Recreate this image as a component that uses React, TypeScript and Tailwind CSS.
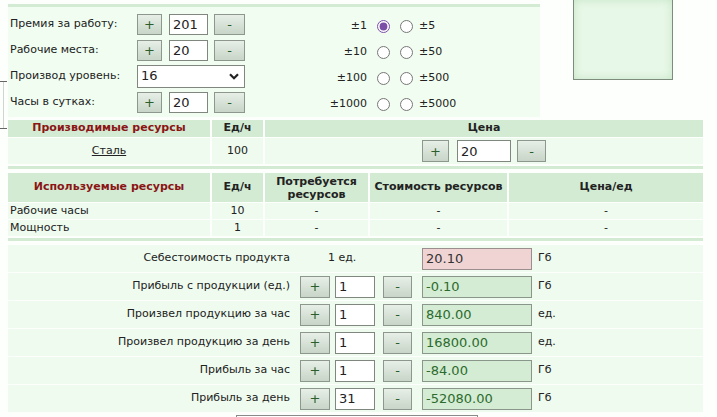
import React from "react";

const btn =
  "flex items-center justify-center border border-[#8d978d] bg-linear-to-b from-[#e7efe7] to-[#c8d5c8] text-[#2b5e2b] text-[13px] leading-none shrink-0";
const inp =
  "border border-[#7f877f] bg-white text-[13px] text-[#222] pl-[3px] outline-none shrink-0";
const hdr = "bg-[#d3ebd3] flex items-center justify-center font-bold";
const row = "bg-[#eefbee] flex items-center justify-center";

function TopRow({ label, value }: { label: string; value: string }) {
  return (
    <div className="flex items-center h-[26px]">
      <div className="w-[127px] shrink-0">{label}</div>
      <div className={`${btn} w-[25px] h-[21px]`}>+</div>
      <input className={`${inp} ml-[7px] w-[39px] h-[21px]`} defaultValue={value} readOnly />
      <div className={`${btn} ml-[6px] w-[31px] h-[21px]`}>-</div>
    </div>
  );
}

function RadioRow({ a, b, checked }: { a: string; b: string; checked?: boolean }) {
  return (
    <div className="flex items-center h-[26px]">
      <div className="w-[62px] text-right">{a}</div>
      <input
        type="radio"
        name="step"
        defaultChecked={checked}
        className="m-0 ml-[10px] w-[13px] h-[13px] accent-[#7b4fa6]"
      />
      <input type="radio" name="step" className="m-0 ml-[10px] w-[13px] h-[13px] accent-[#7b4fa6]" />
      <div className="ml-[6px]">{b}</div>
    </div>
  );
}

function CalcRow({
  label,
  value,
  result,
  unit,
}: {
  label: string;
  value: string;
  result: string;
  unit: string;
}) {
  return (
    <div className="flex items-center h-[27px] bg-[#eefbee] shrink-0">
      <div className="w-[285px] text-right pr-[3px] shrink-0">{label}</div>
      <div className={`${btn} ml-[7px] w-[30px] h-[22px]`}>+</div>
      <input className={`${inp} ml-[5px] w-[40px] h-[22px]`} defaultValue={value} readOnly />
      <div className={`${btn} ml-[8px] w-[29px] h-[22px]`}>-</div>
      <input
        className="ml-[10px] w-[110px] h-[22px] border border-[#8a968a] bg-[#d3ecd3] text-[#2d6a2d] text-[13px] pl-[3px] outline-none shrink-0"
        defaultValue={result}
        readOnly
      />
      <div className="ml-[6px]">{unit}</div>
    </div>
  );
}

export default function App() {
  return (
    <div className="w-[717px] h-[417px] overflow-hidden bg-[#fcfffc] font-['DejaVu_Sans',sans-serif] text-[11px] text-[#222] flex items-start">
      {/* left margin */}
      <div className="w-[8px] shrink-0 flex flex-col">
        <div className="mt-[81px] h-[1px] w-[7px] bg-[#666] shrink-0" />
        <div className="ml-[3px] h-[46px] w-[1px] bg-[#d0d6d0] shrink-0" />
        <div className="h-[1px] w-[7px] bg-[#666] shrink-0" />
      </div>

      <div className="w-[695px] shrink-0 flex flex-col">
        {/* top section */}
        <div className="flex shrink-0">
          <div className="w-[532px] pt-[4px] shrink-0">
            <div className="h-[3px] bg-[#d3ebd3]" />
            <div className="h-[110px] bg-[#f0fdf0] flex">
              <div className="pt-[4px] pl-[2px]">
                <TopRow label="Премия за работу:" value="201" />
                <TopRow label="Рабочие места:" value="20" />
                <div className="flex items-center h-[26px]">
                  <div className="w-[127px] shrink-0">Производ уровень:</div>
                  <div className="w-[108px] h-[23px] border border-[#7f877f] bg-white flex items-center justify-between pl-[3px] pr-[5px] text-[13px]">
                    <span>16</span>
                    <svg width="10" height="7" viewBox="0 0 10 7">
                      <path d="M1 1.2 L5 5.2 L9 1.2" fill="none" stroke="#222" strokeWidth="2.2" />
                    </svg>
                  </div>
                </div>
                <TopRow label="Часы в сутках:" value="20" />
              </div>
              <div className="ml-[60px] pt-[6px]">
                <RadioRow a="±1" b="±5" checked />
                <RadioRow a="±10" b="±50" />
                <RadioRow a="±100" b="±500" />
                <RadioRow a="±1000" b="±5000" />
              </div>
            </div>
          </div>
          <div className="ml-[33px] w-[100px] h-[80px] shrink-0 border-l border-b border-r border-[#7d8c7d] bg-[#e8f8e8] shadow-[inset_0_0_10px_#c6e4c6]" />
        </div>

        {/* produced resources */}
        <div className="mt-[3px] shrink-0 grid grid-cols-[202px_51px_438px] gap-x-[2px] gap-y-[1px]">
          <div className={`${hdr} h-[17px] text-[#8b1515]`}>Производимые ресурсы</div>
          <div className={`${hdr} h-[17px]`}>Ед/ч</div>
          <div className={`${hdr} h-[17px]`}>Цена</div>
          <div className={`${row} h-[26px]`}>
            <span className="underline">Сталь</span>
          </div>
          <div className={`${row} h-[26px]`}>100</div>
          <div className={`${row} h-[26px]`}>
            <div className={`${btn} w-[27px] h-[22px]`}>+</div>
            <input className={`${inp} ml-[8px] w-[54px] h-[22px]`} defaultValue="20" readOnly />
            <div className={`${btn} ml-[6px] w-[29px] h-[22px]`}>-</div>
          </div>
        </div>
        <div className="mt-[2px] h-[3px] bg-[#d3ebd3] shrink-0" />

        {/* used resources */}
        <div className="mt-[4px] shrink-0 grid grid-cols-[202px_51px_103px_137px_194px] gap-x-[2px] gap-y-[1px]">
          <div className={`${hdr} h-[29px] text-[#8b1515]`}>Используемые ресурсы</div>
          <div className={`${hdr} h-[29px]`}>Ед/ч</div>
          <div className={`${hdr} h-[29px] text-center leading-[13px]`}>
            Потребуется
            <br />
            ресурсов
          </div>
          <div className={`${hdr} h-[29px]`}>Стоимость ресурсов</div>
          <div className={`${hdr} h-[29px]`}>Цена/ед</div>

          <div className="bg-[#eefbee] h-[16px] flex items-center pl-[2px]">Рабочие часы</div>
          <div className={`${row} h-[16px]`}>10</div>
          <div className={`${row} h-[16px]`}>-</div>
          <div className={`${row} h-[16px]`}>-</div>
          <div className={`${row} h-[16px]`}>-</div>

          <div className="bg-[#eefbee] h-[16px] flex items-center pl-[2px]">Мощность</div>
          <div className={`${row} h-[16px]`}>1</div>
          <div className={`${row} h-[16px]`}>-</div>
          <div className={`${row} h-[16px]`}>-</div>
          <div className={`${row} h-[16px]`}>-</div>
        </div>
        <div className="mt-[2px] h-[3px] bg-[#d3ebd3] shrink-0" />

        {/* calculation */}
        <div className="mt-[4px] flex flex-col gap-[1px] shrink-0">
          <div className="flex items-center h-[27px] bg-[#eefbee] shrink-0">
            <div className="w-[285px] text-right pr-[3px] shrink-0">Себестоимость продукта</div>
            <div className="ml-[7px] w-[112px] pl-[28px] shrink-0">1 ед.</div>
            <input
              className="ml-[10px] w-[110px] h-[22px] border border-[#9a8e8e] bg-[#f0d3d3] text-[#333] text-[13px] pl-[3px] outline-none shrink-0"
              defaultValue="20.10"
              readOnly
            />
            <div className="ml-[6px]">Гб</div>
          </div>
          <CalcRow label="Прибыль с продукции (ед.)" value="1" result="-0.10" unit="Гб" />
          <CalcRow label="Произвел продукцию за час" value="1" result="840.00" unit="ед." />
          <CalcRow label="Произвел продукцию за день" value="1" result="16800.00" unit="ед." />
          <CalcRow label="Прибыль за час" value="1" result="-84.00" unit="Гб" />
          <CalcRow label="Прибыль за день" value="31" result="-52080.00" unit="Гб" />
        </div>
        <div className="mt-[3px] ml-[228px] w-[242px] h-[20px] shrink-0 border border-[#8a8a8a] bg-white" />
      </div>
    </div>
  );
}
